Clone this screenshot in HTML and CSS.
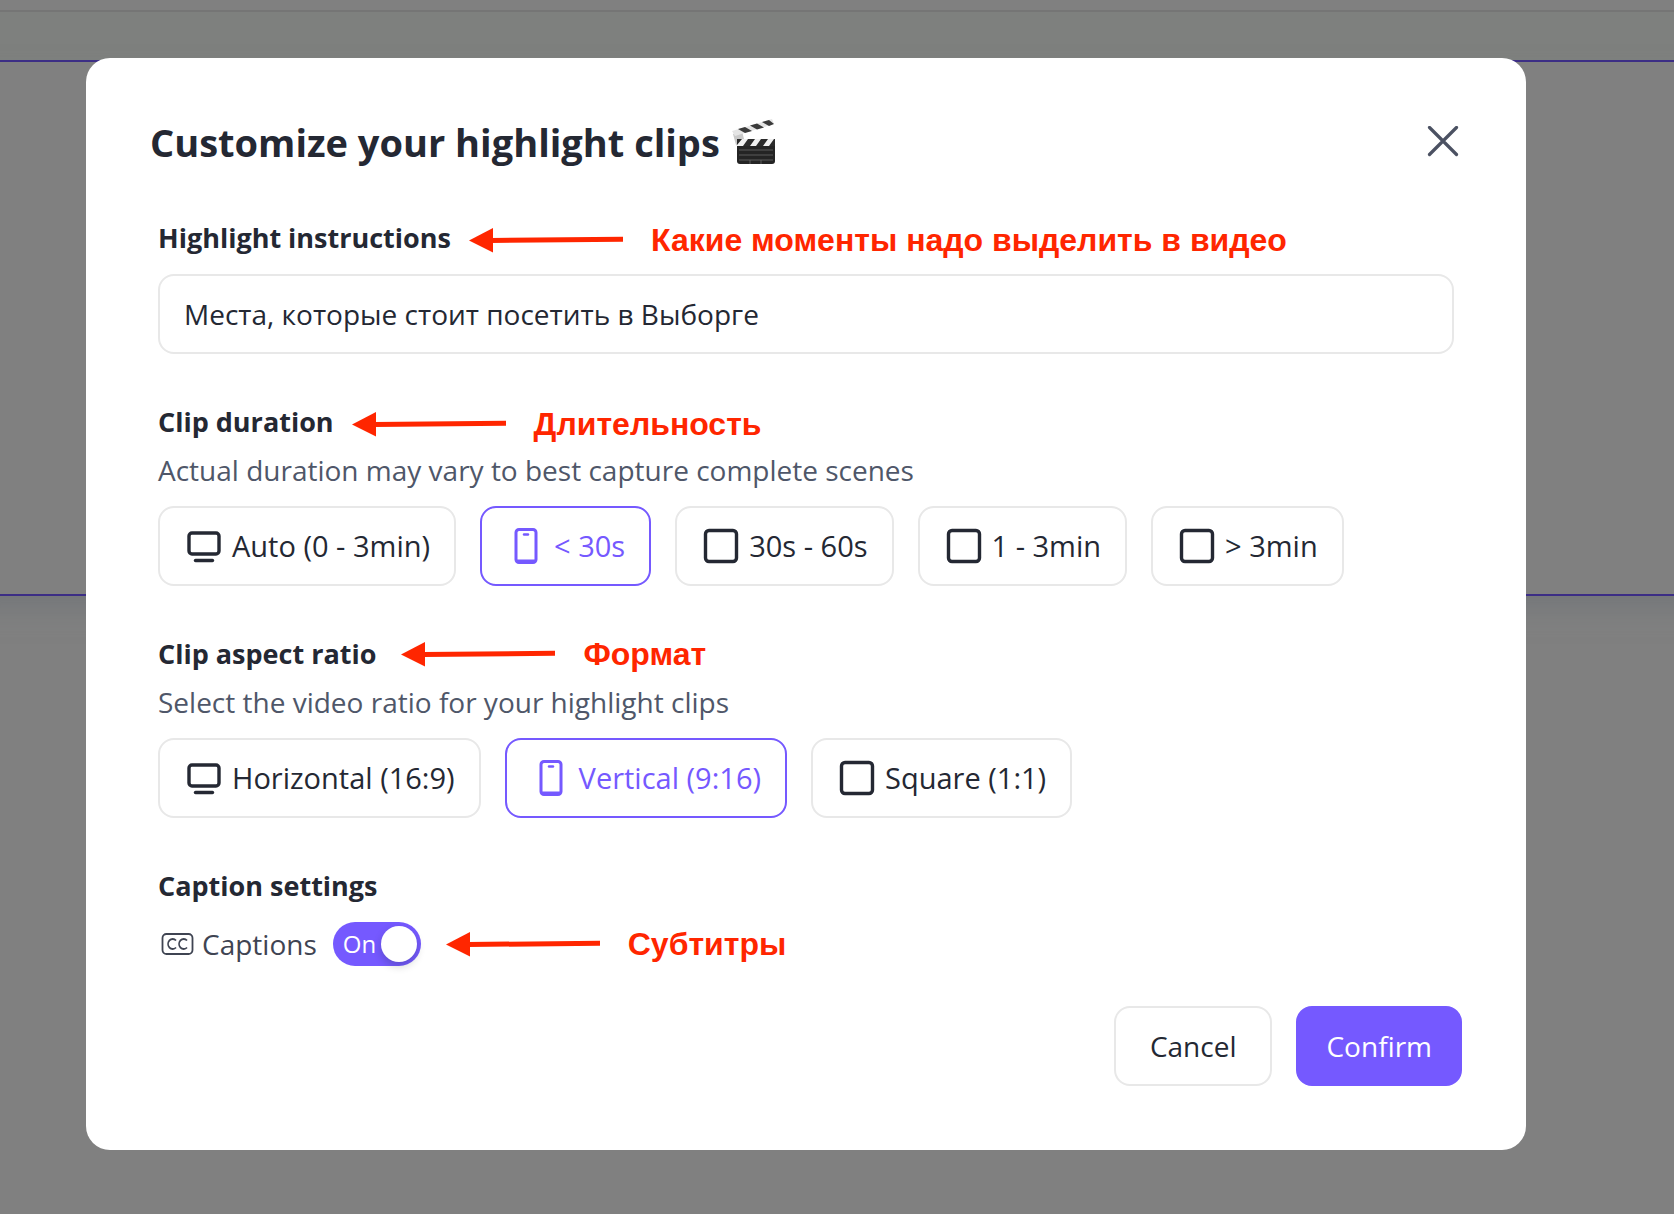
FILE: index.html
```html
<!DOCTYPE html>
<html lang="en">
<head>
<meta charset="utf-8">
<title>Customize your highlight clips</title>
<meta name="viewport" content="width=device-width, initial-scale=1">
<link rel="stylesheet" href="styles.css">
</head>
<body>
<svg class="sprite" aria-hidden="true">
  <symbol id="monitor" viewBox="0 0 36 36">
    <rect x="3" y="5" width="30" height="21" rx="3" fill="none" stroke="currentColor" stroke-width="3.4"/>
    <path d="M9.500 32.500h17" stroke="currentColor" stroke-width="3.400" stroke-linecap="round"/>
  </symbol>
  <symbol id="phone" viewBox="0 0 36 36">
    <rect x="8" y="1.500" width="20" height="33" rx="3" fill="none" stroke="currentColor" stroke-width="3"/>
    <path d="M9 33h18" stroke="currentColor" stroke-width="3"/>
    <path d="M16 6.500h4" stroke="currentColor" stroke-width="2.400" stroke-linecap="round"/>
  </symbol>
  <symbol id="square" viewBox="0 0 36 36">
    <rect x="2.500" y="2.500" width="31" height="31" rx="3.500" fill="none" stroke="currentColor" stroke-width="3.400"/>
  </symbol>
  <symbol id="arrow" viewBox="0 0 154 26">
    <path d="M0 13.500 24 1v24.500Z" fill="currentColor"/>
    <path d="M22 13.500 154 12.300" stroke="currentColor" stroke-width="5"/>
  </symbol>
</svg>
<div class="page" aria-hidden="true">
  <div class="topbar"></div>
  <div class="band"></div>
  <div class="panel"></div>
</div>
<div class="overlay">
  <main class="modal" role="dialog" aria-labelledby="title">
    <header class="header">
      <h1 class="title" id="title">Customize your highlight clips
        <svg class="clapper" viewBox="0 0 44 46" aria-hidden="true">
          <path d="M1 15 4 26 6 27 12 20 10 12Z" fill="#c9c9c9"/>
          <path d="M0 12 40 0l2 5L3 17Z" fill="#e4e4e4"/>
          <path d="m6 10 7-2 7 4-7 2ZM18 6.500l7-2 7 4-7 2ZM30 3l7-2 5 4-5 2Z" fill="#3a3a3a"/>
          <path d="M5 20h38v7H5Z" fill="#f0f0f0"/>
          <path d="M5 20h5l-5 6ZM16 20h7l-5 7h-7ZM29 20h7l-5 7h-7ZM42 20h1v7h-6Z" fill="#2b2b2b"/>
          <path d="M5 27h38v15q0 3-3 3H8q-3 0-3-3Z" fill="#242424"/>
          <path d="M7 31h34M7 36h34M7 41h34M18 41v4M29 41v4" stroke="#6b6b6b" stroke-width="0.800"/>
        </svg>
      </h1>
      <button class="close" type="button" aria-label="Close">
        <svg viewBox="0 0 32 32"><path d="m2.500 1.500 27 27m0-27-27 27" stroke="currentColor" stroke-width="3.200" stroke-linecap="round"/></svg>
      </button>
    </header>

    <form class="sections">
      <section class="section">
        <div class="heading">
          <label class="label" for="instructions">Highlight instructions</label>
          <p class="note note-low"><svg class="arrow"><use href="#arrow"/></svg>Какие моменты надо выделить в видео</p>
        </div>
        <input class="field" id="instructions" type="text" value="Места, которые стоит посетить в Выборге">
      </section>

      <section class="section">
        <div class="heading">
          <h2 class="label">Clip duration</h2>
          <p class="note note-low"><svg class="arrow"><use href="#arrow"/></svg>Длительность</p>
        </div>
        <p class="hint">Actual duration may vary to best capture complete scenes</p>
        <div class="options">
          <button class="option" type="button"><svg class="icon"><use href="#monitor"/></svg>Auto (0 - 3min)</button>
          <button class="option selected" type="button"><svg class="icon"><use href="#phone"/></svg>&lt; 30s</button>
          <button class="option" type="button"><svg class="icon"><use href="#square"/></svg>30s - 60s</button>
          <button class="option" type="button"><svg class="icon"><use href="#square"/></svg>1 - 3min</button>
          <button class="option" type="button"><svg class="icon"><use href="#square"/></svg>&gt; 3min</button>
        </div>
      </section>

      <section class="section">
        <div class="heading">
          <h2 class="label">Clip aspect ratio</h2>
          <p class="note note-far"><svg class="arrow"><use href="#arrow"/></svg>Формат</p>
        </div>
        <p class="hint">Select the video ratio for your highlight clips</p>
        <div class="options">
          <button class="option" type="button"><svg class="icon"><use href="#monitor"/></svg>Horizontal (16:9)</button>
          <button class="option selected" type="button"><svg class="icon"><use href="#phone"/></svg>Vertical (9:16)</button>
          <button class="option" type="button"><svg class="icon"><use href="#square"/></svg>Square (1:1)</button>
        </div>
      </section>

      <section class="section">
        <h2 class="label">Caption settings</h2>
        <div class="captions">
          <label class="captions-label" for="captions">
            <svg class="cc" viewBox="0 0 36 24" aria-hidden="true">
              <rect x="4.500" y="2" width="30" height="20" rx="4" fill="none" stroke="currentColor" stroke-width="1.800"/>
              <path d="M18 8.500a4.600 5 0 1 0 0 7M29 8.500a4.600 5 0 1 0 0 7" fill="none" stroke="currentColor" stroke-width="1.800"/>
            </svg>
            Captions
          </label>
          <span class="toggle">
            <input class="toggle-input" id="captions" type="checkbox" role="switch" checked>
            <span class="toggle-text">On</span>
            <span class="knob"></span>
          </span>
          <p class="note note-far"><svg class="arrow"><use href="#arrow"/></svg>Субтитры</p>
        </div>
      </section>
    </form>

    <footer class="footer">
      <button class="button" type="button">Cancel</button>
      <button class="button primary" type="button">Confirm</button>
    </footer>
  </main>
</div>
</body>
</html>
```
FILE: styles.css
```css
* { box-sizing: border-box; }

body {
  margin: 0;
  min-height: 100vh;
  display: grid;
  grid-template-columns: 100%;
  background: #808080;
  color: #242833;
  font: 28px/40px "Open Sans", "Noto Sans", sans-serif;
}

h1, h2, p { margin: 0; }
button, input { font: inherit; color: inherit; }
svg { flex: none; fill: none; }
.sprite { position: absolute; width: 0; height: 0; }

.page, .overlay { grid-area: 1 / 1; }
.page { overflow: hidden; }

.topbar { height: 12px; border-bottom: 2px solid #757575; }
.band { height: 48px; background: #7e807e; }
.panel {
  height: 536px;
  margin: 0 -32px;
  border-top: 2px solid #3c2e85;
  border-bottom: 2px solid #3c2e85;
  box-shadow: 0 16px 24px -4px #74777a;
  background: #808080;
}

.overlay { position: relative; padding: 58px 148px 64px 86px; }
.modal {
  padding: 64px;
  border-radius: 24px;
  background: #fff;
}

.header { display: flex; justify-content: space-between; align-items: center; height: 40px; }
.title { display: flex; align-items: center; gap: 12px; font-size: 38px; line-height: 40px; font-weight: 700; }
.clapper { width: 44px; height: 46px; }
.close {
  display: flex;
  margin: 0 3px 0 0;
  padding: 0;
  border: 0;
  background: none;
  color: #4b5162;
}
.close svg { width: 32px; height: 32px; }

.sections { display: flex; flex-direction: column; gap: 48px; margin: 56px 8px 40px; }
.heading { display: flex; align-items: center; height: 40px; }
.label { display: block; line-height: 40px; font-size: 27px; font-weight: 700; }

.note {
  display: flex;
  align-items: center;
  gap: 28px;
  margin-left: 18px;
  color: #ff2600;
  font: 700 32px/40px "Liberation Sans", Arial, sans-serif;
}
.note-far { margin-left: 25px; }
.note-low { margin-top: 4px; }
.arrow { width: 154px; height: 26px; }

.field {
  display: block;
  width: 100%;
  height: 80px;
  margin-top: 16px;
  padding: 0 24px;
  border: 2px solid #e8e8e8;
  border-radius: 16px;
  background: #fff;
}

.hint { margin-top: 8px; color: #4f5769; }
.options { display: flex; flex-wrap: wrap; gap: 24px; margin-top: 16px; }
.option {
  display: flex;
  align-items: center;
  gap: 10px;
  height: 80px;
  padding: 0 24px 0 26px;
  border: 2px solid #e8e8e8;
  border-radius: 16px;
  background: #fff;
  font-size: 29px;
  font-weight: 500;
}
.option.selected { border-color: #7559ff; color: #7559ff; }
.icon { width: 36px; height: 36px; }

.captions { display: flex; align-items: center; height: 44px; margin-top: 16px; }
.captions-label { display: flex; align-items: center; gap: 8px; color: #3f4452; }
.cc { width: 36px; height: 24px; }

.toggle {
  display: flex;
  align-items: center;
  position: relative;
  width: 88px;
  height: 44px;
  margin-left: 16px;
  padding: 0 4px 0 10px;
  justify-content: space-between;
  border-radius: 22px;
  background: #7559ff;
  color: #fff;
  font-size: 24px;
}
.toggle-input { position: absolute; inset: 0; width: 100%; height: 100%; margin: 0; opacity: 0; }
.knob { width: 36px; height: 36px; border-radius: 50%; background: #fff; box-shadow: 0 4px 8px rgba(0, 35, 11, 0.2); }

.footer { display: flex; justify-content: flex-end; gap: 24px; }
.button {
  height: 80px;
  padding: 0 34px;
  border: 2px solid #e8e8e8;
  border-radius: 16px;
  background: #fff;
  font-weight: 500;
}
.primary { padding: 0 28px; border-color: #7559ff; background: #7559ff; color: #fff; }
```
